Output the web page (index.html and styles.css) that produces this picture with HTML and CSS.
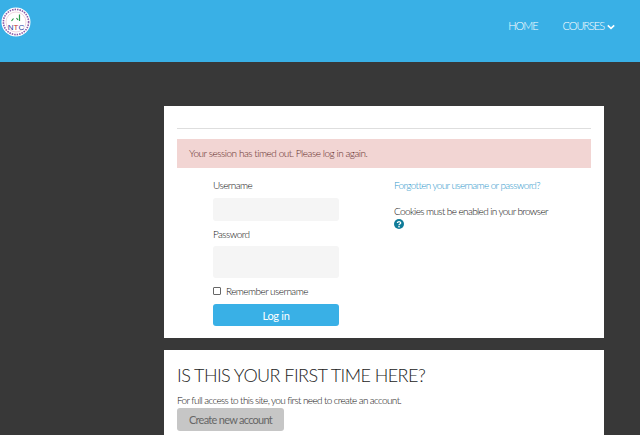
FILE: index.html
```html
<!DOCTYPE html>
<html lang="en">
<head>
    <meta charset="UTF-8">
    <meta name="viewport" content="width=device-width, initial-scale=1.0">
    <title>Log in to the site</title>
    <link rel="stylesheet" href="styles.css">
</head>
<body>
    <header class="navbar">
        <a href="#" class="logo">
            <svg viewBox="0 0 30 30" width="30" height="30">
                <circle cx="15" cy="15" r="14.5" fill="#ffffff"/>
                <circle cx="15" cy="15" r="12.6" fill="none" stroke="#8a5aa8" stroke-width="1.6" stroke-dasharray="1.5 1"/>
                <circle cx="15" cy="15" r="10" fill="#ffffff" stroke="#e0a8c0" stroke-width="0.5"/>
                <path d="M10.5 14 L12.5 11.5 M18.5 7.5 L18.5 14 M15.5 11 L17 13" fill="none" stroke="#2a9a4a" stroke-width="1.2"/>
                <text x="15" y="22.5" class="logo-text">N<tspan class="logo-t">T</tspan>C</text>
            </svg>
        </a>
        <nav class="menu">
            <a href="#">HOME</a>
            <a href="#" class="has-sub">COURSES<svg viewBox="0 0 10 7" width="8" height="6"><path d="M1 1.5 L5 5.2 L9 1.5" fill="none" stroke="#ffffff" stroke-width="2"/></svg></a>
        </nav>
    </header>

    <main class="page">
        <section class="card login-card">
            <hr class="rule">
            <div class="alert">Your session has timed out. Please log in again.</div>
            <div class="login-cols">
                <form class="login-form">
                    <label for="username">Username</label>
                    <input type="text" id="username" class="field">
                    <label for="password" class="label-second">Password</label>
                    <input type="password" id="password" class="field field-tall">
                    <div class="remember">
                        <span class="check"></span>
                        <span>Remember username</span>
                    </div>
                    <button type="button" class="login-button">Log in</button>
                </form>
                <div class="login-help">
                    <a href="#" class="forgot">Forgotten your username or password?</a>
                    <p class="cookies">Cookies must be enabled in your browser</p>
                    <svg class="help-icon" viewBox="0 0 10 10" width="10" height="10">
                        <circle cx="5" cy="5" r="5" fill="#0f7c99"/>
                        <path d="M3.4 3.9 C3.4 2.2 6.7 2.2 6.7 3.9 C6.7 5 5 5 5 6.2" fill="none" stroke="#ffffff" stroke-width="1.3"/>
                        <rect x="4.3" y="7" width="1.4" height="1.4" fill="#ffffff"/>
                    </svg>
                </div>
            </div>
        </section>

        <section class="card signup-card">
            <h2>IS THIS YOUR FIRST TIME HERE?</h2>
            <p class="signup-text">For full access to this site, you first need to create an account.</p>
            <button type="button" class="signup-button">Create new account</button>
        </section>
    </main>
</body>
</html>
```

FILE: styles.css
```css
html, body {
    height: 100%;
}
body {
    font-family: Lato, "Open Sans", sans-serif;
    font-weight: 300;
    background-color: #383838;
    color: #111;
    margin: 0;
    overflow: hidden;
}
.navbar {
    height: 62px;
    background-color: #39b0e6;
    display: flex;
    justify-content: space-between;
    padding: 7px 25px 0 1px;
    box-sizing: border-box;
}
.logo {
    display: block;
    height: 30px;
}
.logo-text {
    font-family: "Liberation Sans", sans-serif;
    font-size: 8px;
    fill: #2a3f9f;
    text-anchor: middle;
}
.logo-t {
    fill: #c0303a;
}
.menu {
    display: flex;
    gap: 25px;
    padding-top: 11px;
}
.menu a {
    color: #ffffff;
    font-size: 11px;
    font-weight: 300;
    letter-spacing: -1.05px;
    line-height: 15px;
    text-decoration: none;
}
.has-sub svg {
    margin-left: 3px;
}
.page {
    padding: 44px 36px 0 164px;
}
.card {
    background-color: #ffffff;
    padding: 0 13px;
}
.login-card {
    height: 232px;
    box-sizing: border-box;
    padding-top: 22px;
    margin-bottom: 12px;
}
.rule {
    border: 0;
    border-top: 1px solid #dedede;
    margin: 0 0 10px;
}
.alert {
    height: 29px;
    line-height: 28px;
    background-color: #f2d5d3;
    color: #5e2a28;
    font-size: 10px;
    letter-spacing: -0.47px;
    padding-left: 12px;
}
.login-cols {
    display: flex;
    padding-top: 11px;
    font-size: 10px;
    letter-spacing: -0.55px;
}
.login-form {
    width: 126px;
    margin-left: 36px;
    display: flex;
    flex-direction: column;
}
.login-form label {
    line-height: 13px;
    margin-bottom: 6px;
}
.login-form .label-second {
    margin-top: 1px;
    margin-bottom: 5px;
}
.field {
    height: 23px;
    box-sizing: border-box;
    border: 0;
    border-radius: 3px;
    background-color: #f5f5f5;
    margin-bottom: 6px;
}
.field-tall {
    height: 32px;
    margin-bottom: 8px;
}
.remember {
    display: flex;
    align-items: center;
    gap: 5px;
    height: 10px;
    white-space: nowrap;
}
.check {
    width: 6px;
    height: 6px;
    border: 1px solid #666;
    border-radius: 1px;
    flex: none;
}
.login-button {
    height: 22px;
    margin-top: 8px;
    border: 0;
    border-radius: 3px;
    background-color: #39b0e6;
    color: #ffffff;
    font-family: Lato, sans-serif;
    font-size: 11px;
    letter-spacing: -0.3px;
}
.login-help {
    margin-left: 55px;
    letter-spacing: -0.62px;
}
.forgot {
    display: block;
    color: #2f98cc;
    text-decoration: none;
    line-height: 13px;
}
.cookies {
    margin: 13px 0 1px;
    line-height: 13px;
}
.help-icon {
    display: block;
}
.signup-card {
    padding-top: 13px;
    height: 85px;
}
.signup-card h2 {
    margin: 0;
    font-size: 18px;
    font-weight: 300;
    letter-spacing: -0.55px;
    line-height: 24px;
    color: #222;
}
.signup-text {
    margin: 7px 0 0;
    font-size: 10px;
    letter-spacing: -0.63px;
    line-height: 13px;
}
.signup-button {
    display: block;
    width: 107px;
    height: 23px;
    margin-top: 1px;
    border: 0;
    border-radius: 3px;
    background-color: #c6c6c6;
    color: #666;
    font-family: Lato, sans-serif;
    font-size: 11px;
    letter-spacing: -0.72px;
    padding: 0;
}
```
